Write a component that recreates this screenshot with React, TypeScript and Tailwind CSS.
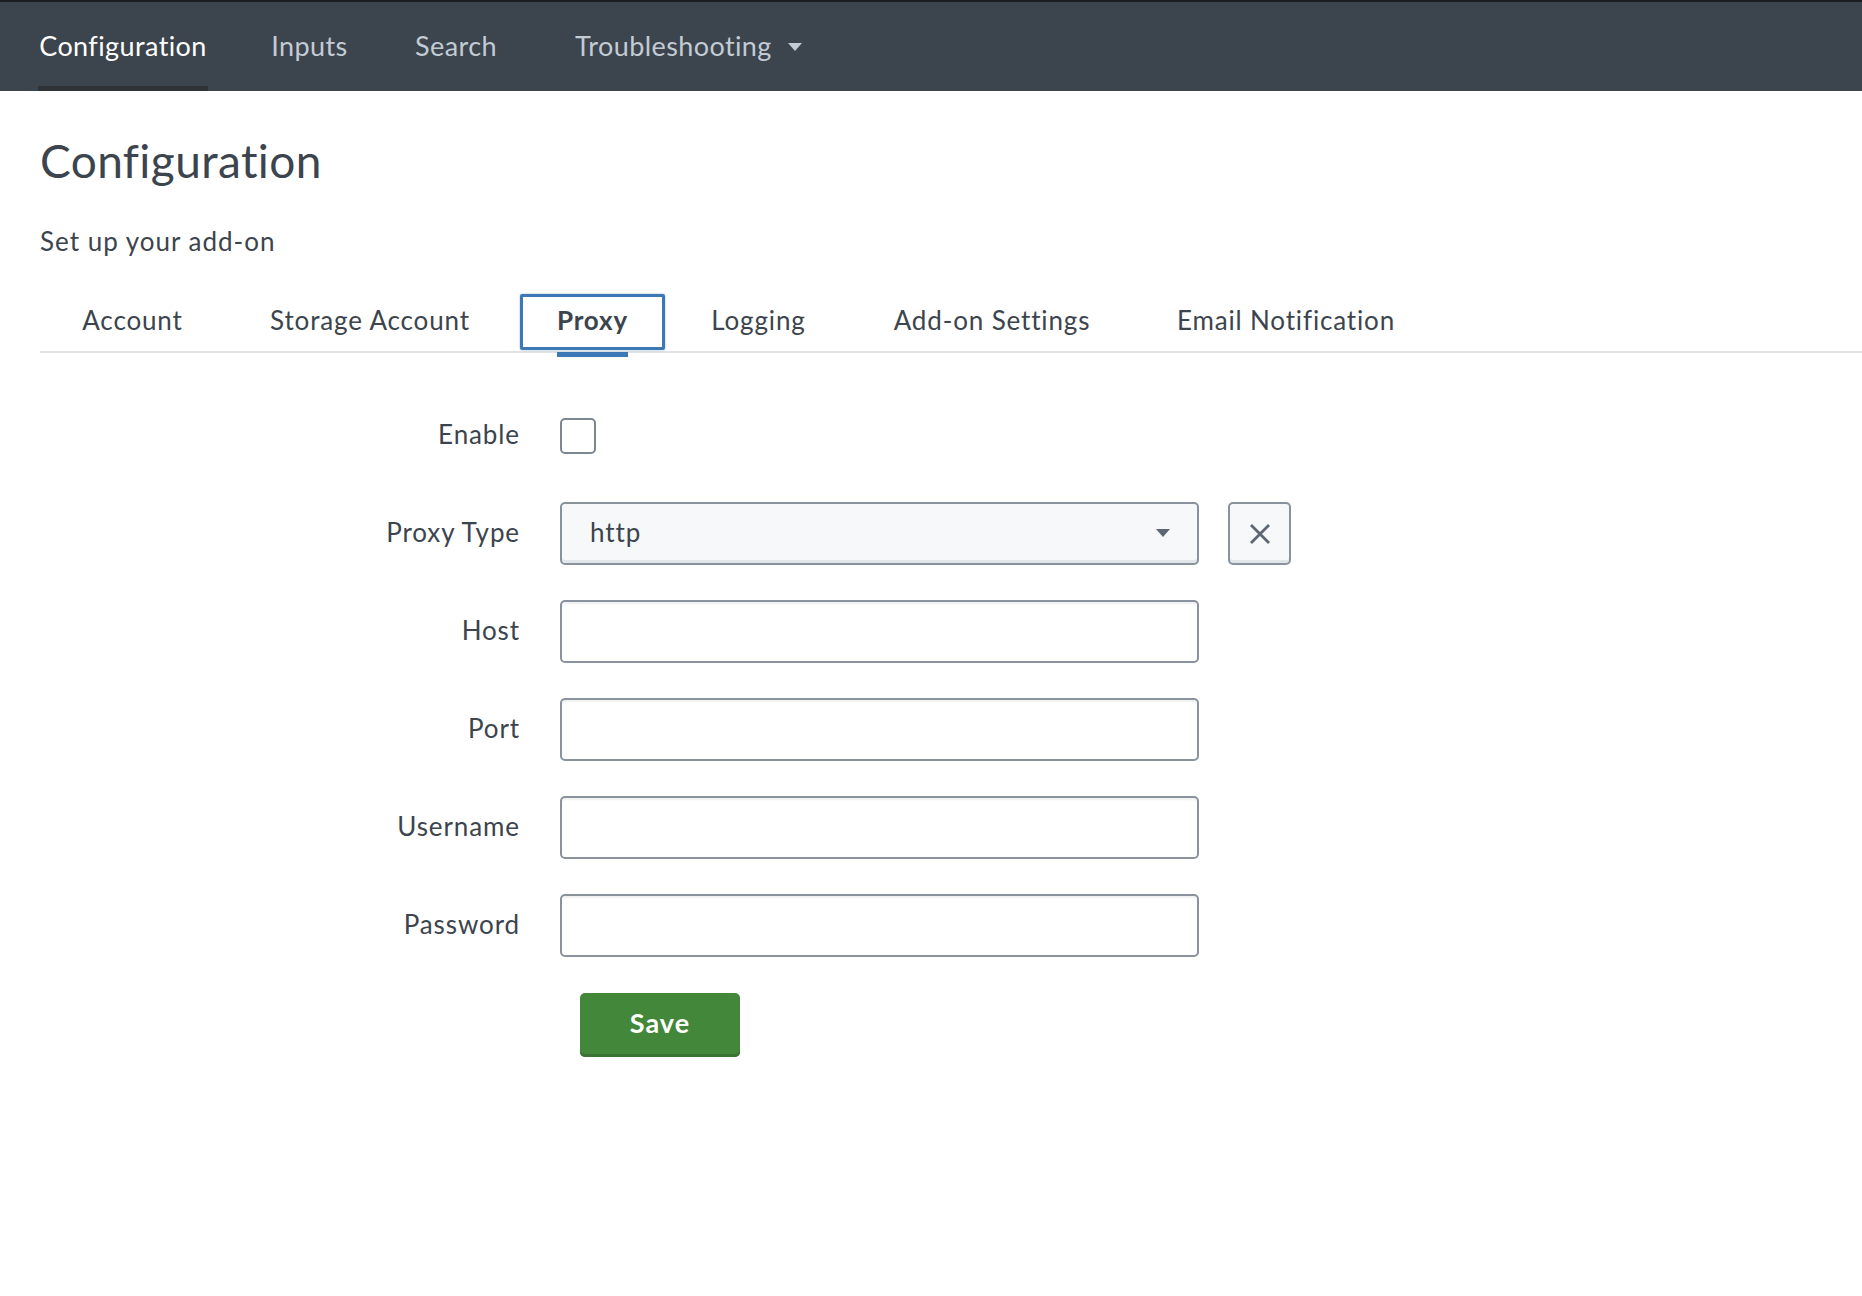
import React from "react";

const font = {
  fontFamily: "Lato, 'Open Sans', 'Liberation Sans', sans-serif",
  fontVariantLigatures: "none" as const,
};

function Caret({ className }: { className?: string }) {
  return (
    <svg width="14" height="8" viewBox="0 0 14 8" className={className}>
      <path d="M0 0 L14 0 L7 8 Z" fill="currentColor" />
    </svg>
  );
}

function FieldRow({ label, children }: { label: string; children: React.ReactNode }) {
  return (
    <div className="flex h-[63px] items-center">
      <div className="w-[480px] pb-[2px] text-right text-[26px] tracking-[0.9px] text-[#3c444d]">{label}</div>
      <div className="ml-[40px] flex items-center">{children}</div>
    </div>
  );
}

function TextInput() {
  return (
    <input
      type="text"
      className="h-[63px] w-[639px] rounded-[5px] border-2 border-[#8a939d] bg-white px-[28px] text-[26px] text-[#3c444d] shadow-[inset_0_2px_2px_rgba(0,0,0,0.06)] outline-none"
    />
  );
}

export default function App() {
  const tabs = [
    { name: "Account", w: "w-[185px]" },
    { name: "Storage Account", w: "w-[290px]" },
    { name: "Proxy", w: "w-[155px]", active: true },
    { name: "Logging", w: "w-[177px]" },
    { name: "Add-on Settings", w: "w-[290px]" },
    { name: "Email Notification", w: "w-[298px]" },
  ];
  return (
    <div className="min-h-[1296px] w-full bg-white" style={font}>
      {/* Top nav */}
      <div className="flex h-[91px] items-stretch border-t-2 border-[#1b1e22] bg-[#3c444d] pl-[38px] tracking-[0.4px]">
        <div className="relative flex w-[170px] items-center justify-center text-[27px] text-white">
          Configuration
          <div className="absolute bottom-0 left-0 right-0 h-[5px] bg-[#2f3337]" />
        </div>
        <div className="ml-[61px] flex w-[81px] items-center justify-center text-[27px] text-[#c3cbd4]">
          Inputs
        </div>
        <div className="ml-[60px] flex w-[92px] items-center justify-center text-[27px] text-[#c3cbd4]">
          Search
        </div>
        <div className="ml-[70px] flex items-center gap-[16px] px-[3px] text-[27px] text-[#c3cbd4]">
          Troubleshooting
          <Caret className="text-[#c3cbd4]" />
        </div>
      </div>

      {/* Page */}
      <div className="pl-[40px]">
        <div className="mt-[41px] flex h-[56px] items-center text-[46px] tracking-[0.4px] text-[#3c444d]">
          Configuration
        </div>
        <div className="mt-[37px] flex h-[32px] items-center text-[26px] tracking-[1px] text-[#3c444d]">
          Set up your add-on
        </div>

        {/* Tabs */}
        <div className="mt-[32px] flex border-b-2 border-[#dfe3e7]">
          {tabs.map((t) => (
            <div
              key={t.name}
              className={`relative flex h-[62px] items-center justify-center text-[26px] tracking-[0.85px] text-[#3c444d] ${t.w} ${
                t.active ? "font-bold" : ""
              }`}
            >
              {t.active && (
                <div className="absolute inset-x-[5px] top-[5px] bottom-[1px] rounded-[2px] border-[3px] border-[#3b78b5] shadow-[0_0_2px_rgba(59,120,181,0.6)]" />
              )}
              <span className="relative">
                {t.name}
                {t.active && <span className="absolute -bottom-[17px] left-0 right-0 h-[5px] bg-[#3b78b5]" />}
              </span>
            </div>
          ))}
        </div>

        {/* Form */}
        <div className="mt-[51px] flex flex-col gap-[35px]">
          <FieldRow label="Enable">
            <div className="h-[36px] w-[36px] rounded-[5px] border-2 border-[#7d8792] bg-white" />
          </FieldRow>
          <FieldRow label="Proxy Type">
            <div className="flex h-[63px] w-[639px] items-center justify-between rounded-[5px] border-2 border-[#8a939d] bg-[#f7f8fa] pb-[2px] pl-[28px] pr-[27px] text-[26px] tracking-[0.9px] text-[#3c444d] shadow-[inset_0_-3px_0_#e1e6eb]">
              <span>http</span>
              <Caret className="text-[#5c6773]" />
            </div>
            <button className="ml-[29px] flex h-[63px] w-[63px] items-center justify-center rounded-[5px] border-2 border-[#8a939d] bg-[#f7f8fa] shadow-[inset_0_-3px_0_#e1e6eb]">
              <svg width="22" height="22" viewBox="0 0 22 22">
                <path d="M2 2 L20 20 M20 2 L2 20" stroke="#5c6773" strokeWidth="2.8" />
              </svg>
            </button>
          </FieldRow>
          <FieldRow label="Host">
            <TextInput />
          </FieldRow>
          <FieldRow label="Port">
            <TextInput />
          </FieldRow>
          <FieldRow label="Username">
            <TextInput />
          </FieldRow>
          <FieldRow label="Password">
            <TextInput />
          </FieldRow>
        </div>
        <div className="mt-[36px] pl-[540px]">
          <button className="h-[64px] w-[160px] rounded-[5px] bg-[#43873b] pb-[4px] text-[27px] font-bold tracking-[1px] text-white shadow-[inset_0_-3px_0_#3a7433]">
            Save
          </button>
        </div>
      </div>
    </div>
  );
}
